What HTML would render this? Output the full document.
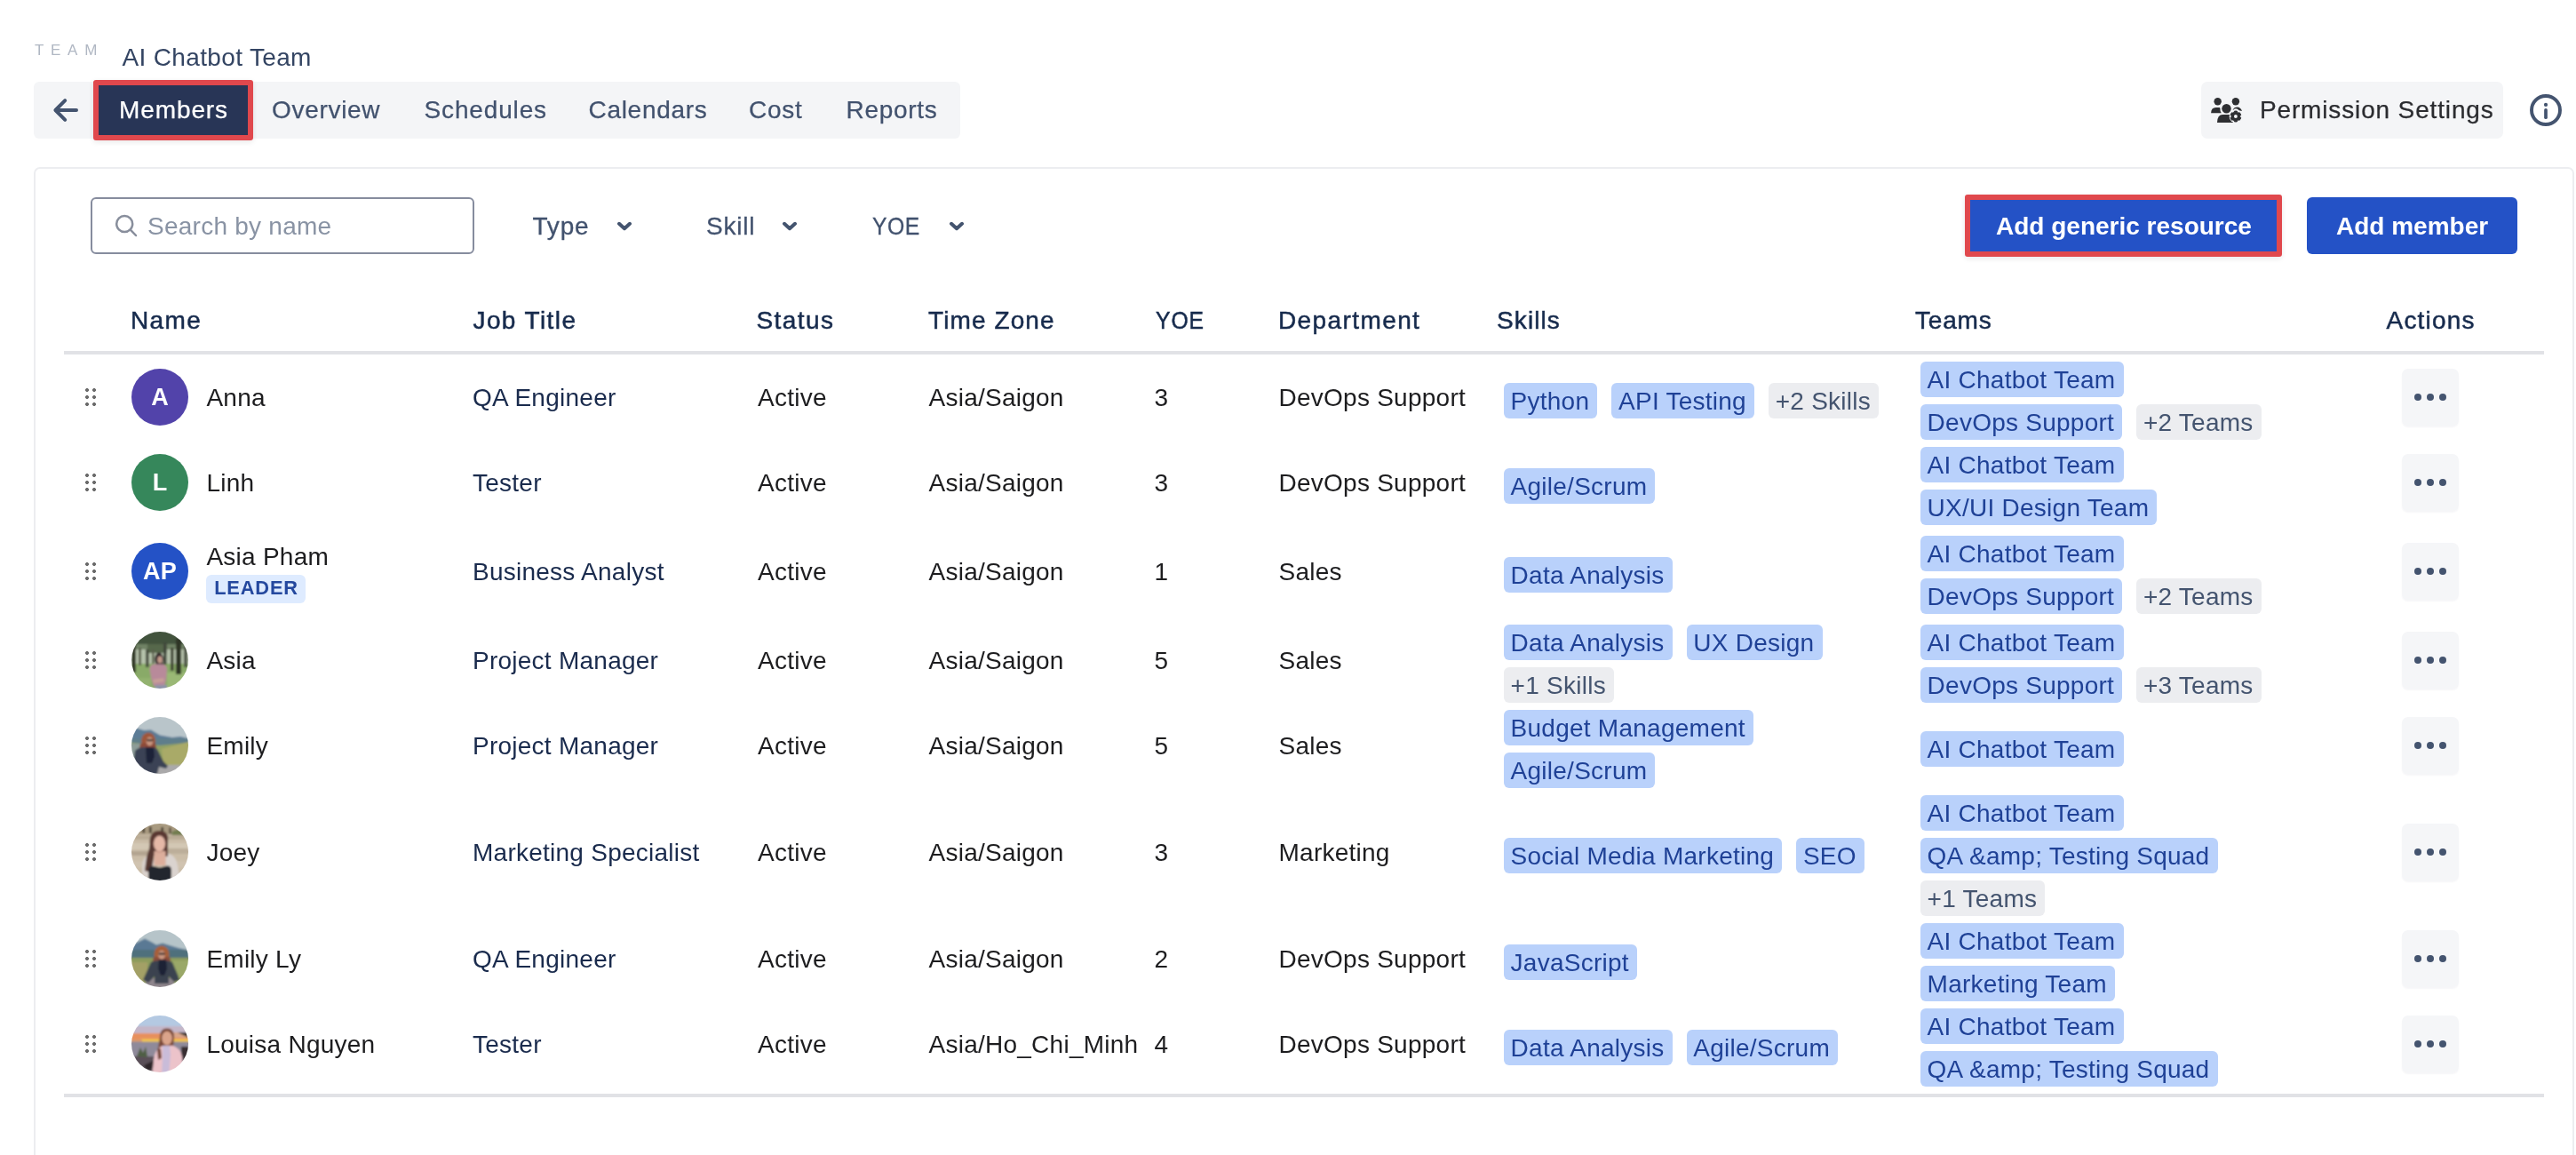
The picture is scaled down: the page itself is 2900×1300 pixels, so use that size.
<!DOCTYPE html>
<html lang="en">
<head>
<meta charset="utf-8">
<title>AI Chatbot Team - Members</title>
<style>
*{box-sizing:border-box;margin:0;padding:0}
html,body{width:2900px;height:1300px;overflow:hidden;background:#fff}
body{position:relative;font-family:"Liberation Sans",sans-serif;font-size:28px;color:#1d1d1f;-webkit-font-smoothing:antialiased}
#wrap{position:absolute;left:0;top:0;width:2900px;height:1300px;will-change:transform}
.abs{position:absolute}
.t{position:absolute;white-space:nowrap;line-height:40px;height:40px}

/* top */
.teamlbl{left:39px;top:37px;font-size:17px;letter-spacing:7.7px;color:#b0b7c3}
.title{left:137.5px;top:45px;font-size:28px;color:#344563;letter-spacing:.35px}
.tabbar{position:absolute;left:38px;top:92px;width:1043px;height:64px;background:#f4f5f7;border-radius:6px}
.tab{position:absolute;top:104px;color:#42526e;letter-spacing:.7px;-webkit-text-stroke:.25px #42526e}
.tabsel{position:absolute;left:111px;top:96px;width:168px;height:56px;background:#283556}
.redbox{position:absolute;border:6px solid #e0484d;border-radius:3px;box-shadow:0 2px 6px rgba(0,0,0,.09)}
.perm{position:absolute;left:2478px;top:92px;width:340px;height:64px;background:#f4f5f7;border-radius:7px}
.permtxt{left:2544px;top:104px;color:#2b2c30;letter-spacing:.85px;-webkit-text-stroke:.25px #2b2c30}

/* panel */
.panel{position:absolute;left:38px;top:188px;width:2860px;height:1200px;border:2px solid #ecedf0;border-radius:7px;background:#fff}
.search{position:absolute;left:102px;top:222px;width:432px;height:64px;border:2px solid #868c9e;border-radius:6px;background:#fff}
.ph{left:166px;top:235px;color:#8993a4;letter-spacing:.25px}
.flt{top:235px;color:#42526e;letter-spacing:.8px;-webkit-text-stroke:.3px #42526e}
.btn{position:absolute;top:222px;height:64px;background:#2452c6;border-radius:6px}
.btntxt{top:235px;color:#fff;font-weight:700;letter-spacing:0}

/* table */
.th{top:340.5px;color:#172b4d;letter-spacing:1.4px;-webkit-text-stroke:.5px #172b4d}
.hr{position:absolute;left:72px;width:2792px;height:4px;background:#e1e2e6}
.row{position:absolute;left:0;width:2900px}
.row>.c{position:absolute;top:50%;margin-top:-19.2px;line-height:40px;height:40px;white-space:nowrap;letter-spacing:.25px}
.nm{left:232.4px}
.job{left:532px;color:#1a2b4d}
.st{left:853px}
.tz{left:1045.5px}
.yoe{left:1299.5px}
.dep{left:1439.5px}
.grip{position:absolute;left:96px;top:50%;margin-top:-10px;width:12px;height:20px;
 background:
 radial-gradient(circle 2.3px at 2px 2px,#6b6b6b 0 1.6px,transparent 2.3px),
 radial-gradient(circle 2.3px at 10px 2px,#6b6b6b 0 1.6px,transparent 2.3px),
 radial-gradient(circle 2.3px at 2px 10px,#6b6b6b 0 1.6px,transparent 2.3px),
 radial-gradient(circle 2.3px at 10px 10px,#6b6b6b 0 1.6px,transparent 2.3px),
 radial-gradient(circle 2.3px at 2px 18px,#6b6b6b 0 1.6px,transparent 2.3px),
 radial-gradient(circle 2.3px at 10px 18px,#6b6b6b 0 1.6px,transparent 2.3px)}
.av{position:absolute;left:148px;top:50%;margin-top:-32px;width:64px;height:64px;border-radius:50%;overflow:hidden;
 color:#fff;text-align:center;line-height:64px;font-size:27px;font-weight:700;letter-spacing:.2px}
.av svg{display:block;width:64px;height:64px}
.tags{position:absolute;top:50%;transform:translateY(-50%);display:flex;flex-wrap:wrap;align-content:flex-start}
.sk{left:1693px;width:460px}
.tm{left:2162px;width:460px}
.tag{display:block;height:40px;line-height:41px;margin:8px 16px 0 0;padding:0 9.2px 0 7.6px;letter-spacing:.25px;border-radius:6px;background:#b9d1fb;color:#1f4196;white-space:nowrap}
.tag.g{background:#ecedf0;color:#44546f}
.br{flex-basis:100%;height:0}
.act{position:absolute;left:2704px;top:50%;margin-top:-32px;width:64px;height:64px;border-radius:7px;background:#f5f6f8;box-shadow:0 2px 2px rgba(9,30,66,.04)}
.act i{position:absolute;top:28px;width:8px;height:8px;border-radius:50%;background:#44546f}
.act i:nth-child(1){left:14px}.act i:nth-child(2){left:28px}.act i:nth-child(3){left:42px}
.leader{position:absolute;left:232px;top:55.5px;width:112px;height:32px;border-radius:6px;background:#deebff;color:#24489e;font-size:21.8px;font-weight:700;letter-spacing:.85px;line-height:29.6px;text-align:center;padding-left:1px}
</style>
</head>
<body>
<div id="wrap">

<!-- header line -->
<div class="t teamlbl">TEAM</div>
<div class="t title">AI Chatbot Team</div>

<!-- tab bar -->
<div class="tabbar"></div>
<svg class="abs" style="left:56px;top:106px" width="36" height="36" viewBox="0 0 36 36" fill="none" stroke="#44546f" stroke-width="4" stroke-linecap="round" stroke-linejoin="round"><path d="M30 18H7M17.2 7.2L6.4 18l10.8 10.8"/></svg>
<div class="tabsel"></div>
<div class="redbox" style="left:105px;top:90px;width:180px;height:68px"></div>
<div class="t tab" style="left:134px;letter-spacing:.9px;color:#fff;-webkit-text-stroke:.25px #fff">Members</div>
<div class="t tab" style="left:306px">Overview</div>
<div class="t tab" style="left:477.5px;letter-spacing:.85px">Schedules</div>
<div class="t tab" style="left:662.5px">Calendars</div>
<div class="t tab" style="left:843px">Cost</div>
<div class="t tab" style="left:952.5px">Reports</div>

<!-- permission settings -->
<div class="perm"></div>
<svg class="abs" style="left:2488px;top:108px" width="38" height="32" viewBox="0 0 38 32" fill="#2e2f32">
<circle cx="8.65" cy="6.2" r="4.2"/>
<circle cx="28.9" cy="6.2" r="4.2"/>
<path d="M1.1 19.3Q1.3 12.9 6.6 12.9H10.6Q11.8 13.2 11.4 14.8Q11.2 17.2 12.7 19.3Z"/>
<path d="M25.6 15.9Q27 12.5 30.6 12.5Q34.4 12.7 36 17L32.6 16.2Q31.2 14.3 28.9 14.3Q27 14.4 26 15.9Z"/>
<circle cx="18.5" cy="14.2" r="5.9" fill="#f4f5f7"/>
<circle cx="18.5" cy="14.2" r="5.2"/>
<path d="M8 29.9Q8.3 20.9 14.2 20.9H22Q26 21.2 26 25V29.9Z"/>
<circle cx="28.9" cy="23" r="7.25" fill="#f4f5f7"/>
<path d="M30.75 18.41 L30.27 17.06 L27.53 17.06 L27.05 18.41 L25.85 19.1 L24.44 18.84 L23.07 21.22 L24 22.31 L24 23.69 L23.07 24.78 L24.44 27.16 L25.85 26.9 L27.05 27.59 L27.53 28.94 L30.27 28.94 L30.75 27.59 L31.95 26.9 L33.36 27.16 L34.73 24.78 L33.8 23.69 L33.8 22.31 L34.73 21.22 L33.36 18.84 L31.95 19.1Z" stroke="#2e2f32" stroke-width="1" stroke-linejoin="round"/>
<circle cx="28.9" cy="23" r="1.95" fill="#f4f5f7"/>
</svg>
<div class="t permtxt">Permission Settings</div>
<svg class="abs" style="left:2846px;top:104px" width="40" height="40" viewBox="0 0 40 40"><circle cx="20" cy="20" r="16" fill="none" stroke="#44546f" stroke-width="3.9"/><circle cx="20" cy="13.95" r="2.1" fill="#44546f"/><rect x="18.15" y="17.9" width="3.7" height="12.1" rx="1.85" fill="#44546f"/></svg>

<!-- panel -->
<div class="panel"></div>
<div class="search"></div>
<svg class="abs" style="left:128px;top:240px" width="28" height="28" viewBox="0 0 28 28" fill="none" stroke="#888e9c" stroke-width="2.5" stroke-linecap="round"><circle cx="12.2" cy="12" r="9"/><path d="M18.8 18.6l6.2 6.4"/></svg>
<div class="t ph">Search by name</div>

<div class="t flt" style="left:599.5px">Type</div>
<svg class="abs" style="left:693px;top:246px" width="20" height="16" viewBox="0 0 20 16" fill="none" stroke="#44546f" stroke-width="4" stroke-linecap="round" stroke-linejoin="round"><path d="M4 5.8l6 5.4 6-5.4"/></svg>
<div class="t flt" style="left:795px">Skill</div>
<svg class="abs" style="left:879px;top:246px" width="20" height="16" viewBox="0 0 20 16" fill="none" stroke="#44546f" stroke-width="4" stroke-linecap="round" stroke-linejoin="round"><path d="M4 5.8l6 5.4 6-5.4"/></svg>
<div class="t flt" style="left:982px;letter-spacing:.6px;transform:scaleX(.885);transform-origin:0 0">YOE</div>
<svg class="abs" style="left:1067px;top:246px" width="20" height="16" viewBox="0 0 20 16" fill="none" stroke="#44546f" stroke-width="4" stroke-linecap="round" stroke-linejoin="round"><path d="M4 5.8l6 5.4 6-5.4"/></svg>

<div class="btn" style="left:2218px;width:345px;border-radius:0"></div>
<div class="redbox" style="left:2212px;top:219px;width:357px;height:70px"></div>
<div class="t btntxt" style="left:2247px">Add generic resource</div>
<div class="btn" style="left:2597px;width:237px"></div>
<div class="t btntxt" style="left:2630px">Add member</div>

<!-- table header -->
<div class="t th" style="left:147px">Name</div>
<div class="t th" style="left:532.5px">Job Title</div>
<div class="t th" style="left:851.5px">Status</div>
<div class="t th" style="left:1045px;letter-spacing:1.1px">Time Zone</div>
<div class="t th" style="left:1300.5px;letter-spacing:1px;transform:scaleX(.885);transform-origin:0 0">YOE</div>
<div class="t th" style="left:1439px">Department</div>
<div class="t th" style="left:1685px;letter-spacing:1.1px">Skills</div>
<div class="t th" style="left:2156px;letter-spacing:.8px">Teams</div>
<div class="t th" style="left:2686.5px;letter-spacing:1.2px">Actions</div>
<div class="hr" style="top:395px"></div>

<!-- row 1 -->
<div class="row" style="top:399px;height:96px">
  <div class="grip"></div>
  <div class="av" style="background:#5243aa">A</div>
  <div class="c nm">Anna</div>
  <div class="c job">QA Engineer</div>
  <div class="c st">Active</div>
  <div class="c tz">Asia/Saigon</div>
  <div class="c yoe">3</div>
  <div class="c dep">DevOps Support</div>
  <div class="tags sk"><span class="tag">Python</span><span class="tag">API Testing</span><span class="tag g">+2 Skills</span></div>
  <div class="tags tm"><span class="tag">AI Chatbot Team</span><span class="br"></span><span class="tag">DevOps Support</span><span class="tag g">+2 Teams</span></div>
  <div class="act"><i></i><i></i><i></i></div>
</div>
<!-- row 2 -->
<div class="row" style="top:495px;height:96px">
  <div class="grip"></div>
  <div class="av" style="background:#36875b">L</div>
  <div class="c nm">Linh</div>
  <div class="c job">Tester</div>
  <div class="c st">Active</div>
  <div class="c tz">Asia/Saigon</div>
  <div class="c yoe">3</div>
  <div class="c dep">DevOps Support</div>
  <div class="tags sk"><span class="tag">Agile/Scrum</span></div>
  <div class="tags tm"><span class="tag">AI Chatbot Team</span><span class="br"></span><span class="tag">UX/UI Design Team</span></div>
  <div class="act"><i></i><i></i><i></i></div>
</div>
<!-- row 3 -->
<div class="row" style="top:591px;height:104px">
  <div class="grip"></div>
  <div class="av" style="background:#2452c6">AP</div>
  <div class="c nm" style="margin-top:-36px">Asia Pham</div>
  <div class="leader">LEADER</div>
  <div class="c job">Business Analyst</div>
  <div class="c st">Active</div>
  <div class="c tz">Asia/Saigon</div>
  <div class="c yoe">1</div>
  <div class="c dep">Sales</div>
  <div class="tags sk"><span class="tag">Data Analysis</span></div>
  <div class="tags tm"><span class="tag">AI Chatbot Team</span><span class="br"></span><span class="tag">DevOps Support</span><span class="tag g">+2 Teams</span></div>
  <div class="act"><i></i><i></i><i></i></div>
</div>
<!-- row 4 -->
<div class="row" style="top:695px;height:96px">
  <div class="grip"></div>
  <div class="av"><svg viewBox="0 0 64 64"><defs><filter id="fa" x="-20%" y="-20%" width="140%" height="140%"><feGaussianBlur stdDeviation="1.3"/></filter></defs><g filter="url(#fa)"><rect x="-8" y="-8" width="80" height="80" fill="#a9b99c"/><rect x="-8" y="-8" width="80" height="24" fill="#42533c"/><rect x="-8" y="14" width="80" height="7" fill="#6f8265"/><rect x="-8" y="20" width="80" height="17" fill="#b6c2ab"/><rect x="-8" y="36" width="80" height="36" fill="#89aa68"/><rect x="-8" y="52" width="30" height="20" fill="#93b26f"/><rect x="40" y="46" width="30" height="20" fill="#9ab874"/><rect x="18" y="14" width="22" height="10" fill="#56674b"/><rect x="0" y="14" width="5" height="32" fill="#363b2b"/><rect x="8" y="18" width="3" height="20" fill="#5a604c"/><rect x="16" y="20" width="3.5" height="20" fill="#454b3c"/><rect x="23" y="20" width="2.5" height="16" fill="#5a604c"/><rect x="36" y="12" width="3.5" height="25" fill="#41473a"/><rect x="44" y="18" width="3.5" height="26" fill="#3d4233"/><rect x="50" y="8" width="6" height="40" fill="#2f3427"/><rect x="59" y="16" width="4" height="24" fill="#50564a"/><ellipse cx="31" cy="31" rx="4.8" ry="7.5" fill="#33272a"/><path d="M33 30q4 6 3 14l-4-2z" fill="#3a2c2e"/><ellipse cx="32" cy="31.5" rx="2.8" ry="4" fill="#c49a8a"/><path d="M20.5 43q0-6.5 6-6.5h7q6 0 6.5 6l-1 12-2 7h-12l-2.5-8z" fill="#b88a9a"/><path d="M24 54l12-2 1 4-12 2z" fill="#c79f98"/><rect x="27" y="60" width="13" height="8" fill="#8e93a8"/></g></svg></div>
  <div class="c nm">Asia</div>
  <div class="c job">Project Manager</div>
  <div class="c st">Active</div>
  <div class="c tz">Asia/Saigon</div>
  <div class="c yoe">5</div>
  <div class="c dep">Sales</div>
  <div class="tags sk"><span class="tag">Data Analysis</span><span class="tag">UX Design</span><span class="br"></span><span class="tag g">+1 Skills</span></div>
  <div class="tags tm"><span class="tag">AI Chatbot Team</span><span class="br"></span><span class="tag">DevOps Support</span><span class="tag g">+3 Teams</span></div>
  <div class="act"><i></i><i></i><i></i></div>
</div>
<!-- row 5 -->
<div class="row" style="top:791px;height:96px">
  <div class="grip"></div>
  <div class="av"><svg viewBox="0 0 64 64"><defs><filter id="fe" x="-20%" y="-20%" width="140%" height="140%"><feGaussianBlur stdDeviation="1.1"/></filter></defs><g filter="url(#fe)"><rect x="-8" y="-8" width="80" height="80" fill="#b9c5ca"/><path d="M-8 16L4 12l10 3 8-.500 10 6 14 2.5 9-1 17 4v20h-80z" fill="#5c7b96"/><path d="M-8 24h80v14h-80z" fill="#5f8088" opacity=".8"/><path d="M-8 28l20 2 20 2 40-4v44h-80z" fill="#93a263"/><path d="M34 36l30-8 8 2v26l-36 2z" fill="#a9aa68"/><path d="M-8 30h22v40h-22z" fill="#8d9c98"/><rect x="20" y="54" width="40" height="14" fill="#aaa9aa"/><ellipse cx="19" cy="27" rx="8" ry="9.5" fill="#9f573b"/><path d="M10 30q-2 8 1 12l16-2q2-6-1-12z" fill="#8c4a38"/><ellipse cx="20.5" cy="27.5" rx="3.8" ry="5" fill="#c8957f"/><rect x="17" y="25" width="7.5" height="2.2" rx="1" fill="#3b2a2a"/><path d="M4 38q4-4 10-4h10q5 0 7 6l5 10 5 5-2 3-8-2-3 12h-20l-6-14z" fill="#3a4354"/><path d="M16 34h9l1 10-3 8h-6z" fill="#1c2237"/></g></svg></div>
  <div class="c nm">Emily</div>
  <div class="c job">Project Manager</div>
  <div class="c st">Active</div>
  <div class="c tz">Asia/Saigon</div>
  <div class="c yoe">5</div>
  <div class="c dep">Sales</div>
  <div class="tags sk"><span class="tag">Budget Management</span><span class="br"></span><span class="tag">Agile/Scrum</span></div>
  <div class="tags tm"><span class="tag">AI Chatbot Team</span></div>
  <div class="act"><i></i><i></i><i></i></div>
</div>
<!-- row 6 -->
<div class="row" style="top:887px;height:144px">
  <div class="grip"></div>
  <div class="av"><svg viewBox="0 0 64 64"><defs><filter id="fj" x="-20%" y="-20%" width="140%" height="140%"><feGaussianBlur stdDeviation="1.2"/></filter></defs><g filter="url(#fj)"><rect x="-8" y="-8" width="80" height="80" fill="#cbbda8"/><rect x="-8" y="-8" width="80" height="20" fill="#a89a80"/><rect x="12.5" y="4" width="2.5" height="6.5" fill="#3c3428"/><rect x="20" y="3.5" width="2.5" height="7" fill="#3c3428"/><rect x="33.5" y="4" width="2.5" height="6" fill="#3c3428"/><rect x="42.5" y="4.5" width="2" height="7" fill="#4a4030"/><ellipse cx="53" cy="11" rx="8" ry="4" fill="#727d50"/><rect x="-8" y="13" width="80" height="5" fill="#b9ab95"/><rect x="-8" y="22" width="80" height="7" fill="#d3c7b4"/><rect x="-8" y="31" width="28" height="5" fill="#b3a490"/><rect x="40" y="28" width="32" height="6" fill="#bcae9a"/><rect x="-8" y="42" width="80" height="8" fill="#d0c3b0"/><path d="M12 46q1-9 9-11l5 6-3 23-11-6z" fill="#d9d1cc"/><path d="M38 33q10 1 13 10l3 14-10 8-5-6z" fill="#dad3cf"/><path d="M20.5 21q0-13 11-13t9.5 12l0 17h-15z" fill="#5a3933"/><path d="M21 19l5 12-2 14-2 10-7-2 2-15 3-10z" fill="#573732"/><ellipse cx="31.5" cy="22.5" rx="6.6" ry="9" fill="#e5b8a7"/><path d="M25.5 31h13v16h-13z" fill="#dcae9c"/><path d="M28 30q3.5 2 7 0l0 3h-7z" fill="#cf9f8e"/><path d="M19 52q1-5 6-4l7 1.5 8-2q5 0 5 5v16h-26z" fill="#22252d"/></g></svg></div>
  <div class="c nm">Joey</div>
  <div class="c job">Marketing Specialist</div>
  <div class="c st">Active</div>
  <div class="c tz">Asia/Saigon</div>
  <div class="c yoe">3</div>
  <div class="c dep">Marketing</div>
  <div class="tags sk"><span class="tag">Social Media Marketing</span><span class="tag">SEO</span></div>
  <div class="tags tm"><span class="tag">AI Chatbot Team</span><span class="br"></span><span class="tag">QA &amp;amp; Testing Squad</span><span class="br"></span><span class="tag g">+1 Teams</span></div>
  <div class="act"><i></i><i></i><i></i></div>
</div>
<!-- row 7 -->
<div class="row" style="top:1031px;height:96px">
  <div class="grip"></div>
  <div class="av"><svg viewBox="0 0 64 64"><defs><filter id="fl" x="-20%" y="-20%" width="140%" height="140%"><feGaussianBlur stdDeviation="1.1"/></filter></defs><g filter="url(#fl)"><rect x="-8" y="-8" width="80" height="80" fill="#b6c4c9"/><path d="M-8 24L6 14l9-4.5 8 4 5 3 7-2 8 2.5 10 3 19 4v20h-80z" fill="#5a7994"/><path d="M-8 22h80v14h-80z" fill="#4e6c74" opacity=".75"/><path d="M-8 31h80v40h-80z" fill="#8c9b5b"/><path d="M-8 36h26v22h-26z" fill="#a3a066"/><path d="M46 34h26v20h-26z" fill="#9aa868"/><rect x="16" y="54" width="32" height="14" fill="#8e858c"/><ellipse cx="34" cy="27" rx="8.5" ry="9.5" fill="#a75e38"/><path d="M25 30q-2 7 0 10h18q2-4 0-10z" fill="#8c4d3a"/><ellipse cx="34" cy="27.8" rx="3.8" ry="5" fill="#c99680"/><rect x="30.5" y="25.5" width="7.5" height="2.2" rx="1" fill="#3b2a2a"/><path d="M22 36q4-2 8-2h8q5 0 8 2l6 14 2 6-6 2-6-6v8h-16v-8l-7 7-6-3z" fill="#3a434f"/><path d="M31 33h8l1 10-3 8h-4l-3-8z" fill="#1b2035"/></g></svg></div>
  <div class="c nm">Emily Ly</div>
  <div class="c job">QA Engineer</div>
  <div class="c st">Active</div>
  <div class="c tz">Asia/Saigon</div>
  <div class="c yoe">2</div>
  <div class="c dep">DevOps Support</div>
  <div class="tags sk"><span class="tag">JavaScript</span></div>
  <div class="tags tm"><span class="tag">AI Chatbot Team</span><span class="br"></span><span class="tag">Marketing Team</span></div>
  <div class="act"><i></i><i></i><i></i></div>
</div>
<!-- row 8 -->
<div class="row" style="top:1127px;height:96px">
  <div class="grip"></div>
  <div class="av"><svg viewBox="0 0 64 64"><defs><filter id="fo" x="-20%" y="-20%" width="140%" height="140%"><feGaussianBlur stdDeviation="1.1"/></filter></defs><g filter="url(#fo)"><rect x="-8" y="-8" width="80" height="80" fill="#b4c9e2"/><rect x="-8" y="12" width="80" height="9" fill="#c4b6c8"/><rect x="-8" y="20" width="80" height="8" fill="#e7905d"/><rect x="34" y="19" width="40" height="6" fill="#d9a58a"/><rect x="10" y="26.5" width="62" height="3.5" fill="#f3c84f"/><rect x="-8" y="27" width="20" height="3" fill="#d99a6a"/><rect x="-8" y="29.5" width="80" height="20" fill="#8f8a9a"/><rect x="-8" y="46" width="80" height="26" fill="#5a5058"/><path d="M6 46l4-10 3 6 3-7 2 12z" fill="#4f5f45"/><path d="M52 19l12 0v6z" fill="#453b33"/><rect x="56" y="35" width="12" height="14" fill="#382e32"/><path d="M14 56l12-6 2 6-10 8z" fill="#2e272b"/><path d="M32 24q0-9.5 8-9.5t8 9.5l-1 12h-9l-2 8-2 6-4-1 0-12z" fill="#7a4939"/><ellipse cx="40" cy="25.5" rx="5.8" ry="7.8" fill="#dba48b"/><path d="M25 50q1-12 10-16h12q8 3 10 12l2 24h-36z" fill="#ecc3ca"/><path d="M35 34h8l1 10-2 24h-8l1-20z" fill="#c9bcd9"/><path d="M29 38q2-3 4 0l1 10-4 2z" fill="#74463a"/></g></svg></div>
  <div class="c nm">Louisa Nguyen</div>
  <div class="c job">Tester</div>
  <div class="c st">Active</div>
  <div class="c tz">Asia/Ho_Chi_Minh</div>
  <div class="c yoe">4</div>
  <div class="c dep">DevOps Support</div>
  <div class="tags sk"><span class="tag">Data Analysis</span><span class="tag">Agile/Scrum</span></div>
  <div class="tags tm"><span class="tag">AI Chatbot Team</span><span class="br"></span><span class="tag">QA &amp;amp; Testing Squad</span></div>
  <div class="act"><i></i><i></i><i></i></div>
</div>


<div class="hr" style="top:1231px"></div>
</div>
</body>
</html>
